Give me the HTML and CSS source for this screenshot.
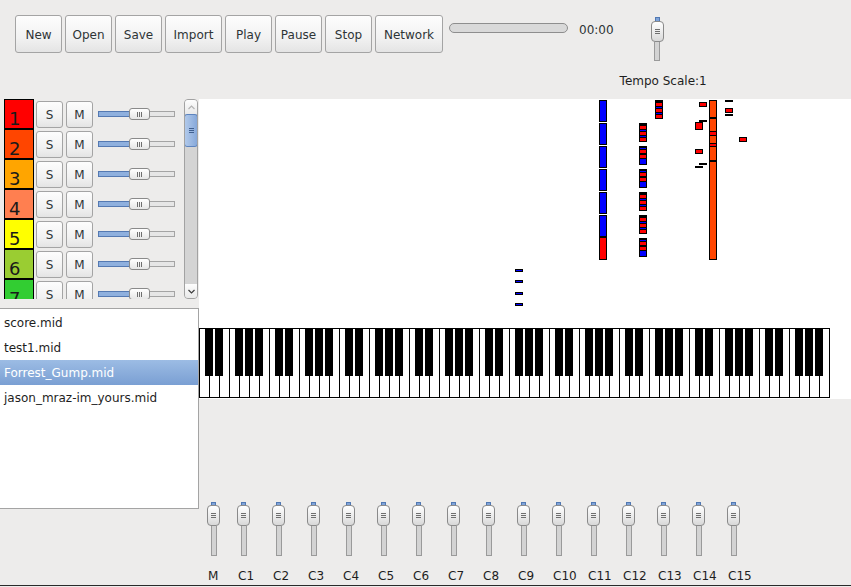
FILE: index.html
```html
<!DOCTYPE html>
<html>
<head>
<meta charset="utf-8">
<title>MIDI Player</title>
<link rel="stylesheet" href="styles.css">
</head>
<body>
<div class="app">
  <header class="toolbar">
    <div class="btns">
      <button class="btn">New</button>
      <button class="btn">Open</button>
      <button class="btn">Save</button>
      <button class="btn import">Import</button>
      <button class="btn">Play</button>
      <button class="btn">Pause</button>
      <button class="btn">Stop</button>
      <button class="btn network">Network</button>
    </div>
    <div class="progress"></div>
    <div class="time">00:00</div>
    <div class="tempo">
      <div class="vslider tempo-slider"><span class="vfill"></span><span class="vhandle"><i></i></span><span class="vtrough"></span></div>
      <div class="tempo-label">Tempo Scale:1</div>
    </div>
  </header>

  <div class="main">
    <div class="left">
      <div class="tracks">
        <div class="track-rows">
          <div class="track"><div class="tcolor c1">1</div><button class="sm">S</button><button class="sm m">M</button><div class="hslider"><span class="hfill"></span><span class="hhandle"><i></i></span><span class="htrough"></span></div></div>
          <div class="track"><div class="tcolor c2">2</div><button class="sm">S</button><button class="sm m">M</button><div class="hslider"><span class="hfill"></span><span class="hhandle"><i></i></span><span class="htrough"></span></div></div>
          <div class="track"><div class="tcolor c3">3</div><button class="sm">S</button><button class="sm m">M</button><div class="hslider"><span class="hfill"></span><span class="hhandle"><i></i></span><span class="htrough"></span></div></div>
          <div class="track"><div class="tcolor c4">4</div><button class="sm">S</button><button class="sm m">M</button><div class="hslider"><span class="hfill"></span><span class="hhandle"><i></i></span><span class="htrough"></span></div></div>
          <div class="track"><div class="tcolor c5">5</div><button class="sm">S</button><button class="sm m">M</button><div class="hslider"><span class="hfill"></span><span class="hhandle"><i></i></span><span class="htrough"></span></div></div>
          <div class="track"><div class="tcolor c6">6</div><button class="sm">S</button><button class="sm m">M</button><div class="hslider"><span class="hfill"></span><span class="hhandle"><i></i></span><span class="htrough"></span></div></div>
          <div class="track"><div class="tcolor c7">7</div><button class="sm">S</button><button class="sm m">M</button><div class="hslider"><span class="hfill"></span><span class="hhandle"><i></i></span><span class="htrough"></span></div></div>
        </div>
        <div class="scrollbar">
          <div class="sb-btn"><svg width="7" height="5" viewBox="0 0 7 5"><polyline points="0.5,4 3.5,1 6.5,4" fill="none" stroke="#b4b4b4" stroke-width="1.2"/></svg></div>
          <div class="sb-thumb"><i></i></div>
          <div class="sb-space"></div>
          <div class="sb-btn down"><svg width="7" height="5" viewBox="0 0 7 5"><polyline points="0.5,1 3.5,4 6.5,1" fill="none" stroke="#3c3c3c" stroke-width="1.2"/></svg></div>
        </div>
      </div>
      <div class="files">
        <div class="file">score.mid</div>
        <div class="file">test1.mid</div>
        <div class="file sel">Forrest_Gump.mid</div>
        <div class="file">jason_mraz-im_yours.mid</div>
      </div>
    </div>

    <div class="right">
      <div class="roll">
        <svg class="notes" width="652" height="229" viewBox="0 0 652 229">
          <g stroke="#000" stroke-width="1">
            <rect x="400.5" y="1.5" width="7" height="21" fill="#0000ff"/>
            <rect x="400.5" y="24.5" width="7" height="21" fill="#0000ff"/>
            <rect x="400.5" y="47.5" width="7" height="21" fill="#0000ff"/>
            <rect x="400.5" y="70.5" width="7" height="21" fill="#0000ff"/>
            <rect x="400.5" y="93.5" width="7" height="21" fill="#0000ff"/>
            <rect x="400.5" y="116.5" width="7" height="21" fill="#0000ff"/>
            <rect x="400.5" y="138.5" width="7" height="22" fill="#ff0000"/>
          </g>
          <g stroke="#000" stroke-width="1" transform="translate(440,24)">
            <rect x="0.5" y="0.5" width="7" height="18" fill="#0000ff"/><rect x="0" y="0" width="8" height="2" fill="#000" stroke="none"/>
            <rect x="0.5" y="2.5" width="7" height="4" fill="#ff0000"/><rect x="0.5" y="8.5" width="7" height="4" fill="#ff0000"/><rect x="0.5" y="14.5" width="7" height="4" fill="#ff0000"/>
          </g>
          <g stroke="#000" stroke-width="1" transform="translate(440,47)">
            <rect x="0.5" y="0.5" width="7" height="18" fill="#0000ff"/><rect x="0" y="0" width="8" height="2" fill="#000" stroke="none"/>
            <rect x="0.5" y="3.5" width="7" height="4" fill="#ff0000"/><rect x="0.5" y="8.5" width="7" height="4" fill="#ff0000"/>
          </g>
          <g stroke="#000" stroke-width="1" transform="translate(440,70)">
            <rect x="0.5" y="0.5" width="7" height="18" fill="#0000ff"/><rect x="0" y="0" width="8" height="2" fill="#000" stroke="none"/>
            <rect x="0.5" y="3.5" width="7" height="4" fill="#ff0000"/><rect x="0.5" y="8.5" width="7" height="4" fill="#ff0000"/>
          </g>
          <g stroke="#000" stroke-width="1" transform="translate(440,93)">
            <rect x="0.5" y="0.5" width="7" height="18" fill="#0000ff"/><rect x="0" y="0" width="8" height="2" fill="#000" stroke="none"/>
            <rect x="0.5" y="2.5" width="7" height="4" fill="#ff0000"/><rect x="0.5" y="8.5" width="7" height="4" fill="#ff0000"/><rect x="0.5" y="14.5" width="7" height="4" fill="#ff0000"/>
          </g>
          <g stroke="#000" stroke-width="1" transform="translate(440,116)">
            <rect x="0.5" y="0.5" width="7" height="18" fill="#0000ff"/><rect x="0" y="0" width="8" height="2" fill="#000" stroke="none"/>
            <rect x="0.5" y="2.5" width="7" height="4" fill="#ff0000"/><rect x="0.5" y="8.5" width="7" height="4" fill="#ff0000"/><rect x="0.5" y="14.5" width="7" height="4" fill="#ff0000"/>
          </g>
          <g stroke="#000" stroke-width="1" transform="translate(440,139)">
            <rect x="0.5" y="0.5" width="7" height="18" fill="#0000ff"/><rect x="0" y="0" width="8" height="2" fill="#000" stroke="none"/>
            <rect x="0.5" y="3.5" width="7" height="4" fill="#ff0000"/><rect x="0.5" y="8.5" width="7" height="4" fill="#ff0000"/>
          </g>
          <g stroke="#000" stroke-width="1" transform="translate(456,1)">
            <rect x="0.5" y="0.5" width="7" height="18" fill="#0000ff"/><rect x="0" y="0" width="8" height="2" fill="#000" stroke="none"/>
            <rect x="0.5" y="2.5" width="7" height="4" fill="#ff0000"/><rect x="0.5" y="8.5" width="7" height="4" fill="#ff0000"/><rect x="0.5" y="14.5" width="7" height="4" fill="#ff0000"/>
          </g>
          <g stroke="#000" stroke-width="1">
            <rect x="510.5" y="1.5" width="7" height="159" fill="#ff4500"/>
            <rect x="510.5" y="32.5" width="7" height="4" fill="#ff0000"/>
            <rect x="510.5" y="44.5" width="7" height="3" fill="#ff0000"/>
            <rect x="500.5" y="3.5" width="7" height="4" fill="#ff0000"/>
            <rect x="496.5" y="23.5" width="7" height="7" fill="#ff0000"/>
            <rect x="496.5" y="50.5" width="7" height="4" fill="#ff0000"/>
            <rect x="526.5" y="9.5" width="7" height="4" fill="#ff0000"/>
            <rect x="540.5" y="38.5" width="7" height="4" fill="#ff0000"/>
            <rect x="316.5" y="170.5" width="7" height="2" fill="#0000ff"/>
            <rect x="316.5" y="181.5" width="7" height="2" fill="#0000ff"/>
            <rect x="316.5" y="193.5" width="7" height="2" fill="#0000ff"/>
            <rect x="316.5" y="204.5" width="7" height="2" fill="#0000ff"/>
          </g>
          <g fill="#000">
            <rect x="510" y="18" width="8" height="2"/>
            <rect x="510" y="61" width="8" height="2"/>
            <rect x="500" y="21" width="8" height="2"/>
            <rect x="500" y="64" width="8" height="2"/>
            <rect x="496" y="67" width="8" height="2"/>
            <rect x="526" y="1" width="8" height="2"/>
            <rect x="526" y="15" width="8" height="2"/>
          </g>
        </svg>
        <div class="keyboard"></div>
      </div>
      <div class="mixer">
        <div class="mcol m"><div class="vslider"><span class="vfill"></span><span class="vhandle"><i></i></span><span class="vtrough"></span></div><div class="mlabel">M</div></div>
        <div class="mcol"><div class="vslider"><span class="vfill"></span><span class="vhandle"><i></i></span><span class="vtrough"></span></div><div class="mlabel">C1</div></div>
        <div class="mcol"><div class="vslider"><span class="vfill"></span><span class="vhandle"><i></i></span><span class="vtrough"></span></div><div class="mlabel">C2</div></div>
        <div class="mcol"><div class="vslider"><span class="vfill"></span><span class="vhandle"><i></i></span><span class="vtrough"></span></div><div class="mlabel">C3</div></div>
        <div class="mcol"><div class="vslider"><span class="vfill"></span><span class="vhandle"><i></i></span><span class="vtrough"></span></div><div class="mlabel">C4</div></div>
        <div class="mcol"><div class="vslider"><span class="vfill"></span><span class="vhandle"><i></i></span><span class="vtrough"></span></div><div class="mlabel">C5</div></div>
        <div class="mcol"><div class="vslider"><span class="vfill"></span><span class="vhandle"><i></i></span><span class="vtrough"></span></div><div class="mlabel">C6</div></div>
        <div class="mcol"><div class="vslider"><span class="vfill"></span><span class="vhandle"><i></i></span><span class="vtrough"></span></div><div class="mlabel">C7</div></div>
        <div class="mcol"><div class="vslider"><span class="vfill"></span><span class="vhandle"><i></i></span><span class="vtrough"></span></div><div class="mlabel">C8</div></div>
        <div class="mcol"><div class="vslider"><span class="vfill"></span><span class="vhandle"><i></i></span><span class="vtrough"></span></div><div class="mlabel">C9</div></div>
        <div class="mcol"><div class="vslider"><span class="vfill"></span><span class="vhandle"><i></i></span><span class="vtrough"></span></div><div class="mlabel">C10</div></div>
        <div class="mcol"><div class="vslider"><span class="vfill"></span><span class="vhandle"><i></i></span><span class="vtrough"></span></div><div class="mlabel">C11</div></div>
        <div class="mcol"><div class="vslider"><span class="vfill"></span><span class="vhandle"><i></i></span><span class="vtrough"></span></div><div class="mlabel">C12</div></div>
        <div class="mcol"><div class="vslider"><span class="vfill"></span><span class="vhandle"><i></i></span><span class="vtrough"></span></div><div class="mlabel">C13</div></div>
        <div class="mcol"><div class="vslider"><span class="vfill"></span><span class="vhandle"><i></i></span><span class="vtrough"></span></div><div class="mlabel">C14</div></div>
        <div class="mcol"><div class="vslider"><span class="vfill"></span><span class="vhandle"><i></i></span><span class="vtrough"></span></div><div class="mlabel">C15</div></div>
      </div>
    </div>
  </div>
  <div class="frame-line"></div>
</div>
</body>
</html>
```

FILE: styles.css
```css
html, body {
  margin: 0;
  padding: 0;
}
body {
  background: #edeceb;
  font-family: "DejaVu Sans", sans-serif;
  font-size: 12px;
  color: #2e3436;
}
.app {
  width: 851px;
  height: 587px;
  overflow: hidden;
  display: flex;
  flex-direction: column;
}

/* toolbar */
.toolbar {
  height: 99px;
  flex-shrink: 0;
  box-sizing: border-box;
  padding: 15px 0 0 15px;
  display: flex;
  align-items: flex-start;
}
.btns {
  display: flex;
  gap: 3px;
}
.btn, .sm {
  box-sizing: border-box;
  border: 1px solid #a4a4a4;
  border-radius: 3px;
  background: linear-gradient(#fdfdfd, #f2f2f2 60%, #e4e4e4);
  font-family: "DejaVu Sans", sans-serif;
  font-size: 12px;
  color: #2e3436;
  padding: 0;
  margin: 0;
}
.btn {
  width: 47px;
  height: 38px;
  padding-top: 2px;
}
.btn.import { width: 57px; }
.btn.network { width: 68px; }
.sm { padding-top: 1px; }

.progress {
  width: 119px;
  height: 10px;
  margin: 8px 0 0 6px;
  box-sizing: border-box;
  border: 1px solid #8e8e8e;
  border-radius: 5px;
  background: #d9d9d9;
}
.time {
  margin: 8px 0 0 11px;
  line-height: 14px;
}
.tempo {
  margin: 2px 0 0 6px;
  display: flex;
  flex-direction: column;
}
.tempo-slider {
  margin-left: 31px;
}
.tempo-slider .vfill { height: 4px; }
.tempo-slider .vtrough { height: 19px; }
.tempo-label {
  margin-top: 13px;
  line-height: 14px;
  color: #1e1e1e;
}

/* vertical slider */
.vslider {
  width: 13px;
  display: flex;
  flex-direction: column;
  align-items: center;
}
.vfill {
  width: 5px;
  height: 3px;
  box-sizing: border-box;
  background: #7fa3d8;
  border: 1px solid #5279b3;
  border-bottom: 0;
}
.vhandle {
  width: 13px;
  height: 21px;
  box-sizing: border-box;
  border: 1px solid #8a8a8a;
  border-radius: 4px;
  background: linear-gradient(#ffffff, #e9e9e9 60%, #d8d8d8);
  display: flex;
  align-items: center;
  justify-content: center;
}
.vhandle i {
  width: 5px;
  height: 5px;
  background: repeating-linear-gradient(#6e6e6e 0 1px, transparent 1px 2px);
}
.vtrough {
  width: 6px;
  height: 30px;
  box-sizing: border-box;
  border: 1px solid #9a9a9a;
  border-top: 0;
  background: #d3d3d3;
}

/* main */
.main {
  height: 486px;
  flex-shrink: 0;
  display: flex;
}
.left {
  width: 199px;
  flex-shrink: 0;
  display: flex;
  flex-direction: column;
}
.tracks {
  height: 200px;
  display: flex;
}
.track-rows {
  width: 184px;
  height: 200px;
  overflow: hidden;
}
.track {
  height: 30px;
  display: flex;
  align-items: center;
  padding-left: 4px;
}
.tcolor {
  width: 30px;
  height: 30px;
  flex-shrink: 0;
  box-sizing: border-box;
  border: 1px solid #000;
  padding: 10px 0 0 4px;
  font-size: 18px;
  line-height: 18px;
  color: #1a1a1a;
  overflow: hidden;
}
.c1 { background: #ff0000; }
.c2 { background: #ff4500; }
.c3 { background: #ffa500; }
.c4 { background: #ff7f50; }
.c5 { background: #ffff00; }
.c6 { background: #9acd32; }
.c7 { background: #32cd32; }
.sm {
  width: 27px;
  height: 27px;
  margin-left: 2px;
  flex-shrink: 0;
}
.sm.m { margin-left: 3px; }

.hslider {
  width: 77px;
  height: 12px;
  margin-left: 5px;
  display: flex;
  align-items: center;
}
.hfill {
  width: 31px;
  height: 6px;
  box-sizing: border-box;
  border: 1px solid #5479b2;
  border-right: 0;
  background: #8fb0de;
}
.hhandle {
  width: 21px;
  height: 12px;
  box-sizing: border-box;
  border: 1px solid #8a8a8a;
  border-radius: 3px;
  background: linear-gradient(#ffffff, #e6e6e6);
  display: flex;
  align-items: center;
  justify-content: center;
}
.hhandle i {
  width: 5px;
  height: 5px;
  background: repeating-linear-gradient(to right, #6e6e6e 0 1px, transparent 1px 2px);
}
.htrough {
  flex: 1;
  height: 6px;
  box-sizing: border-box;
  border: 1px solid #a4a4a4;
  border-left: 0;
  background: #e6e6e6;
}

.scrollbar {
  width: 14px;
  height: 200px;
  box-sizing: border-box;
  border: 1px solid #a2a2a2;
  border-radius: 4px;
  background: #d4d4d4;
  display: flex;
  flex-direction: column;
  overflow: hidden;
}
.sb-btn {
  height: 14px;
  flex-shrink: 0;
  display: flex;
  align-items: center;
  justify-content: center;
  background: linear-gradient(#fdfdfd, #e9e9e9);
}
.sb-btn svg { display: block; }
.sb-thumb {
  height: 33px;
  flex-shrink: 0;
  box-sizing: border-box;
  border: 1px solid #5d84bf;
  border-radius: 3px;
  margin: 0 -1px;
  background: linear-gradient(to right, #b1c9ea, #86a8da);
  display: flex;
  align-items: center;
  justify-content: center;
}
.sb-thumb i {
  width: 5px;
  height: 5px;
  background: repeating-linear-gradient(#3f5f8f 0 1px, transparent 1px 2px);
}
.sb-space { flex: 1; }

.files {
  margin-top: 9px;
  width: 199px;
  height: 201px;
  box-sizing: border-box;
  border: 1px solid #a4a4a4;
  border-left: 0;
  background: #fff;
  padding-top: 1px;
  overflow: hidden;
}
.file {
  height: 25px;
  box-sizing: border-box;
  padding: 2px 0 0 4px;
  line-height: 23px;
  white-space: nowrap;
  color: #1e1e1e;
}
.file.sel {
  background: linear-gradient(#9cbce4, #7a9fd3);
  color: #fff;
}

.right {
  flex: 1;
  display: flex;
  flex-direction: column;
}
.roll {
  height: 300px;
  flex-shrink: 0;
  background: #fff;
  display: flex;
  flex-direction: column;
}
.notes {
  display: block;
  flex-shrink: 0;
}
.keyboard {
  width: 631px;
  height: 70px;
  flex-shrink: 0;
  box-sizing: border-box;
  border-top: 1px solid #000;
  border-bottom: 1px solid #000;
  background:
    linear-gradient(to right,
      transparent 0 6px, #000 6px 14px,
      transparent 14px 16px, #000 16px 24px,
      transparent 24px 36px, #000 36px 44px,
      transparent 44px 46px, #000 46px 54px,
      transparent 54px 56px, #000 56px 64px,
      transparent 64px 70px),
    repeating-linear-gradient(to right, #000 0 1px, #fff 1px 10px);
  background-size: 70px 47px, auto;
  background-repeat: repeat-x, repeat;
}

.mixer {
  margin: 103px 0 0 8px;
  display: flex;
}
.mcol {
  width: 35px;
  flex-shrink: 0;
  display: flex;
  flex-direction: column;
  align-items: flex-start;
}
.mcol.m { width: 30px; }
.mlabel {
  margin: 13px 0 0 1px;
  line-height: 14px;
  color: #1e1e1e;
  white-space: nowrap;
}

.frame-line {
  height: 1px;
  flex-shrink: 0;
  background: #2a2a2a;
}
```
